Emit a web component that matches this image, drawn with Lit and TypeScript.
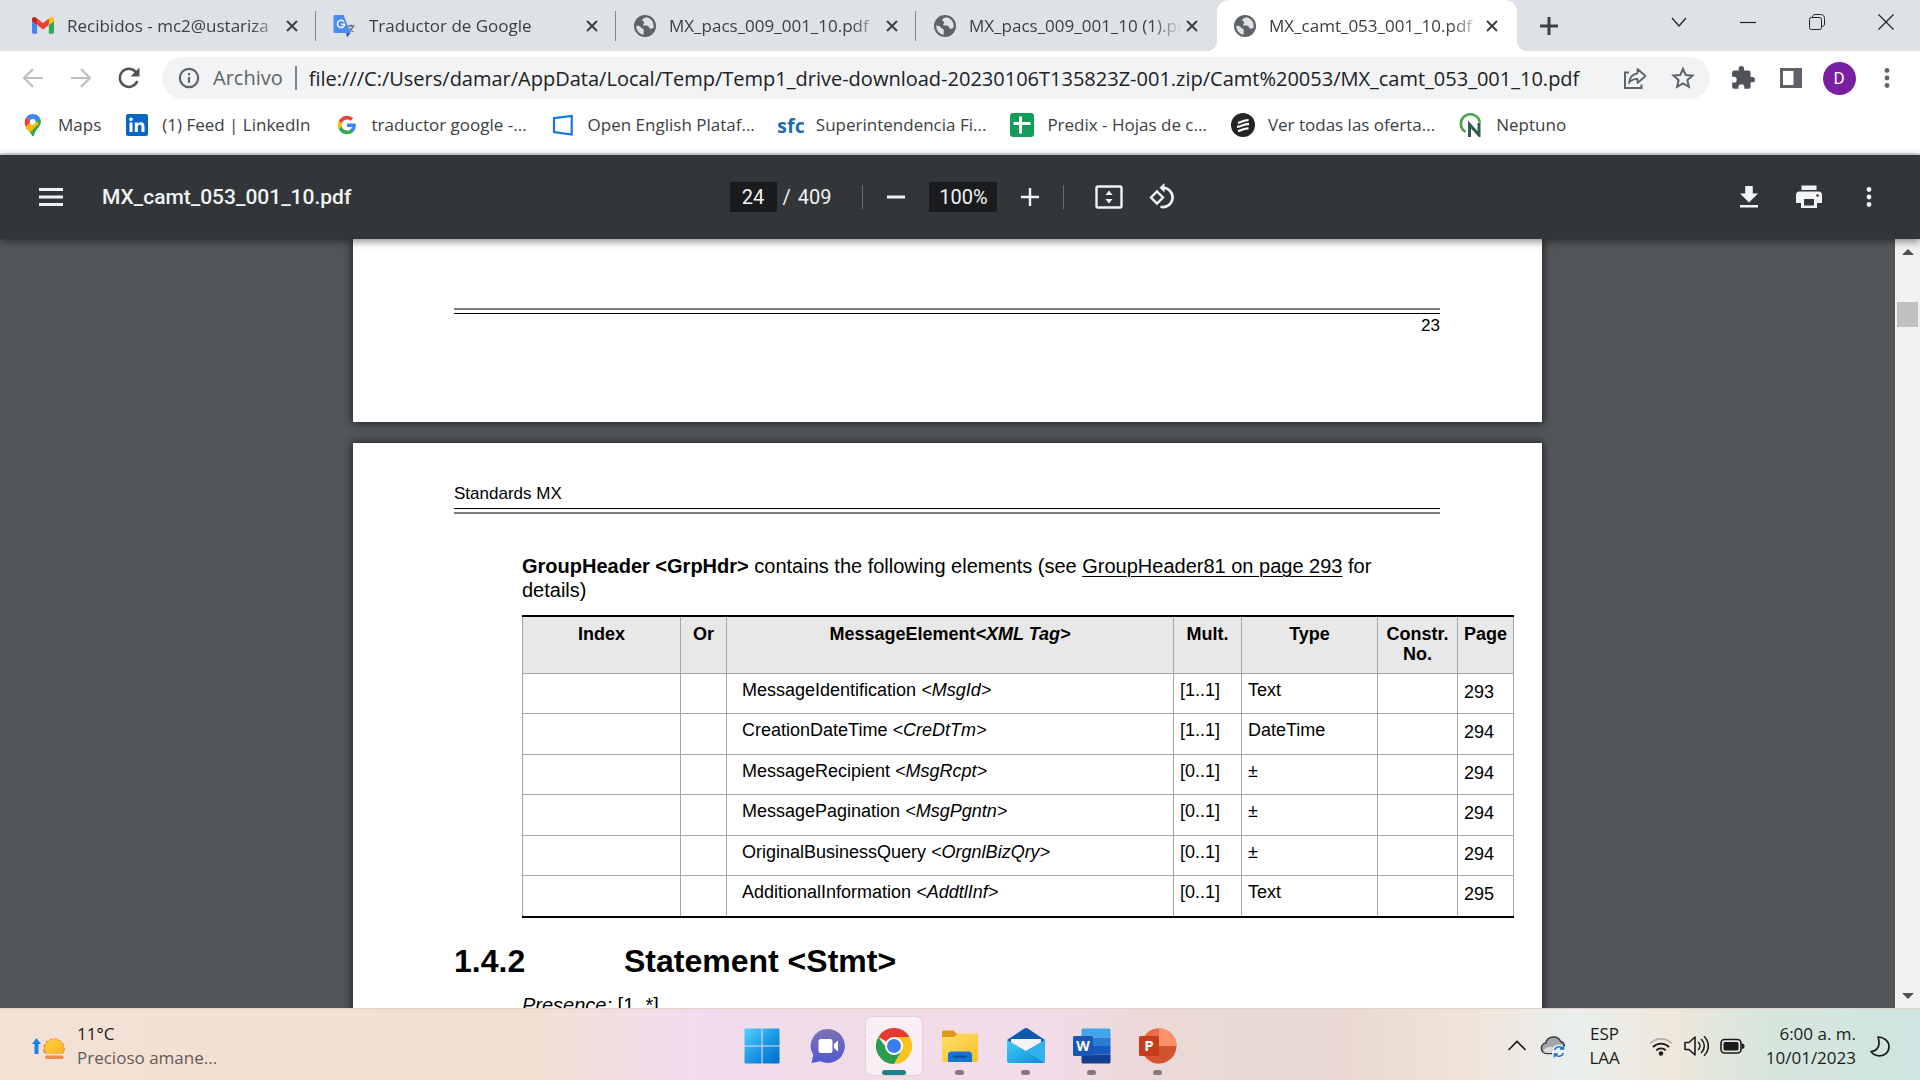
import { LitElement, html, svg, css, nothing, TemplateResult } from "lit";
import { customElement } from "lit/decorators.js";
import { classMap } from "lit/directives/class-map.js";

/* ---------- icons ---------- */

const icon = (size: number, body: TemplateResult, box = "0 0 24 24") =>
  html`<svg width=${size} height=${size} viewBox=${box} fill="none" aria-hidden="true">${body}</svg>`;

const gmail = icon(22, svg`
  <path d="M1.6 20.5h4V11L0 6.8v12.1c0 .9.7 1.6 1.6 1.6z" fill="#4285f4"/>
  <path d="M18.4 20.5h4c.9 0 1.6-.7 1.6-1.6V6.8L18.4 11z" fill="#34a853"/>
  <path d="M18.4 4.7V11L24 6.8V4.6c0-2-2.3-3.2-3.9-2z" fill="#fbbc04"/>
  <path d="M5.6 11V3.8l6.4 4.8 6.4-4.8V11L12 15.8z" fill="#ea4335"/>
  <path d="M0 4.6v2.2L5.6 11V3.8L3.9 2.6C2.3 1.4 0 2.6 0 4.6z" fill="#c5221f"/>`);

const translate = icon(24, svg`
  <path d="M9 6h13a1.500 1.500 0 0 1 1.500 1.500V20a1.500 1.500 0 0 1-1.500 1.500H14z" fill="#dfe1e5"/>
  <path d="M14.500 12h7M18 10.500V12m2 0c-.5 2.500-2 4.500-4.500 6M16.500 14c1 2 2.500 3.300 4.200 4" stroke="#6b757d" stroke-width="1.300"/>
  <path d="M13 19h4.500L14 23.500z" fill="#3a55b0"/>
  <path d="M2 1h8.500L17.500 19H2A1.500 1.500 0 0 1 .5 17.500v-15A1.500 1.500 0 0 1 2 1z" fill="#4a8af4"/>
  <path d="M11 7.900A3.600 3.600 0 1 0 11.600 10.300H8.300" stroke="#fff" stroke-width="1.500"/>`);

const globe = icon(24, svg`
  <circle cx="12" cy="12" r="11" fill="#5f6368"/>
  <path d="M3.200 11.500c2.400.2 4 .6 4.700 2 .6 1.200 2.200 1 2.800 2 .6 1.200-.6 2.300.2 5.300A8.900 8.900 0 0 1 3.200 11.500z" fill="#dee1e6"/>
  <path d="M13.500 3.200c-2 1-4 1-4.200 2.800-.1 1.500 1.500 1 1.900 2.200.3 1.200-1.200 1.300-1 2.600.3 1.500 3 .5 4.700 1.200 1.500.7 1.100 2.400 2.500 2.700 1 .2 2-.6 3.200-1A9 9 0 0 0 13.500 3.200z" fill="#dee1e6"/>`);

const cross = icon(14, svg`<path d="M2 2l10 10M12 2L2 12" stroke="#3c4043" stroke-width="2"/>`, "0 0 14 14");
const plus = icon(20, svg`<path d="M10 1v18M1 10h18" stroke="#3c4043" stroke-width="3"/>`, "0 0 20 20");

const winDown = icon(18, svg`<path d="M2 5l7 8 7-8" stroke="#222" stroke-width="1.200"/>`, "0 0 18 18");
const winMin = icon(18, svg`<path d="M1 9.500h16" stroke="#222" stroke-width="1.200"/>`, "0 0 18 18");
const winRestore = icon(18, svg`<rect x="1.500" y="4.500" width="12" height="12" rx="2" stroke="#222"/><path d="M4.500 4.500C4.500 2.500 5.500 1.500 7 1.500h5.500c2.500 0 4 1.500 4 4V11c0 1.500-1 2.500-3 2.500" stroke="#222"/>`, "0 0 18 18");
const winClose = icon(18, svg`<path d="M1.500 1.500l15 15M16.500 1.500l-15 15" stroke="#222" stroke-width="1.200"/>`, "0 0 18 18");

const back = icon(24, svg`<path d="M22 12H3.500M12 3l-9 9 9 9" stroke="#bdbfc2" stroke-width="2.200"/>`);
const forward = icon(24, svg`<path d="M2 12h18.500M12 3l9 9-9 9" stroke="#bdbfc2" stroke-width="2.200"/>`);
const reload = icon(24, svg`<path d="M20.300 15A9 9 0 1 1 18.800 6.100" stroke="#505459" stroke-width="2.500"/><path d="M22.500 1.500v9h-9z" fill="#505459"/>`);
const info = icon(22, svg`<circle cx="12" cy="12" r="10" stroke="#5f6368" stroke-width="2.400"/><path d="M12 10.800v6.400M12 6.500v2.400" stroke="#5f6368" stroke-width="2.400"/>`);
const share = icon(24, svg`<path d="M6 6.500H2v15.500h16.500v-3.500" stroke="#5f6368" stroke-width="2"/><path d="M14.500 3l8 7-8 7v-4.200c-4 0-6.500 1-8.500 4.200.6-5.500 3.500-9 8.500-9.700z" stroke="#5f6368" stroke-width="1.800" stroke-linejoin="round"/>`);
const star = icon(24, svg`<path d="M12 2.800l2.700 6.200 6.800.6-5.100 4.500 1.500 6.700-5.900-3.500-5.900 3.500 1.500-6.700-5.100-4.500 6.800-.6z" stroke="#5f6368" stroke-width="2"/>`);
const puzzle = icon(26, svg`<path d="M20.500 11H19V7a2 2 0 0 0-2-2h-4V3.500a2.500 2.500 0 0 0-5 0V5H4a2 2 0 0 0-2 2v3.800h1.500a2.700 2.700 0 0 1 0 5.400H2V20a2 2 0 0 0 2 2h3.800v-1.500a2.700 2.700 0 0 1 5.400 0V22H17a2 2 0 0 0 2-2v-4h1.500a2.500 2.500 0 0 0 0-5z" fill="#505459"/>`);
const panel = icon(22, svg`<rect x="1.500" y="2.500" width="19" height="17" stroke="#5f6368" stroke-width="3"/><path d="M13.500 2h7v18h-7z" fill="#5f6368"/>`, "0 0 22 22");
const dots = (c: string) => icon(24, svg`<circle cx="12" cy="4.500" r="2.400" fill=${c}/><circle cx="12" cy="12" r="2.400" fill=${c}/><circle cx="12" cy="19.500" r="2.400" fill=${c}/>`);

const mapsPin = icon(24, svg`
  <path d="M5 15.500L18.500 4.500c2.200 3.500 1.300 6.700-.8 9.300C15 17 13.800 19 12.900 22.500c-.3 1.100-1.500 1.100-1.800 0C10.200 19.500 8 17.500 5 15.500z" fill="#34a853"/>
  <path d="M5.300 4.300L10.300 8.500 4.900 14.300C3.300 11.500 3.200 7.200 5.300 4.300z" fill="#ea4335"/>
  <path d="M4.900 14.300L13.500 5l4.500 6-8.800 9.200c-1.400-2.200-3.100-3.700-4.300-5.900z" fill="#fbbc04"/>
  <path d="M18 10.500c.9-2 1.300-4 .5-6.300l1 3c.4 2.800-.6 5.200-2.300 7.200-2.600 3.200-3.600 5-4.300 8.100-.3 1.100-1.500 1.100-1.800 0-.4-1.200-1-2-1.900-3.300z" fill="#34a853"/>
  <path d="M5.300 4.300C7 2 9.300 1 12 1c3 0 5.500 1.400 6.700 4l-5.400 6.500L10.300 8.500z" fill="#4285f4"/>
  <circle cx="11.700" cy="8.800" r="2.900" fill="#fff"/>`);
const linkedin = icon(22, svg`<rect width="22" height="22" rx="2" fill="#0a66c2"/><path d="M3.500 8.500h3v9.500h-3zM8.800 8.500h2.900v1.300c.6-1 1.700-1.600 3-1.600 3 0 3.800 1.900 3.800 4.500V18h-3v-4.700c0-1.300-.3-2.500-1.700-2.500s-2 1.100-2 2.500V18h-3z" fill="#fff"/><circle cx="5" cy="5.300" r="1.800" fill="#fff"/>`, "0 0 22 22");
const googleG = icon(20, svg`
  <path d="M22.600 12.200c0-.7-.1-1.400-.2-2.100H12v4.200h5.900a5 5 0 0 1-2.200 3.300v2.800h3.600c2.100-2 3.300-4.800 3.300-8.200z" fill="#4285f4"/>
  <path d="M12 23c3 0 5.500-1 7.300-2.700l-3.600-2.700c-1 .7-2.200 1-3.700 1-2.900 0-5.300-1.900-6.200-4.500H2.200V17A11 11 0 0 0 12 23z" fill="#34a853"/>
  <path d="M5.800 14.100a6.600 6.600 0 0 1 0-4.200V7H2.200a11 11 0 0 0 0 9.900z" fill="#fbbc05"/>
  <path d="M12 5.400c1.600 0 3 .6 4.200 1.600l3.200-3.100A11 11 0 0 0 2.200 7l3.600 2.900C6.700 7.300 9.100 5.400 12 5.400z" fill="#ea4335"/>`);
const bookDoor = icon(22, svg`<path d="M2 4.200L19.700 2v18.500L2 18z" stroke="#1a73e8" stroke-width="2.200"/>`, "0 0 22 22");
const sfc = html`<svg width="26" height="26" viewBox="0 0 26 26" aria-hidden="true"><text x="13" y="21" text-anchor="middle" font-family="Open Sans, sans-serif" font-size="20" font-weight="700" fill="#1f6fae">sfc</text></svg>`;
const sheets = icon(24, svg`<rect width="24" height="24" rx="3" fill="#129d58"/><path d="M10.500 3.500v17M3.500 10.500h17" stroke="#fff" stroke-width="3"/>`);
const stripes = icon(24, svg`<circle cx="12" cy="12" r="12" fill="#252525"/><path d="M7 9.800c3.500 0 5.500-3 10.500-2.700M6 13.900c4.500 0 6.800-3.200 12-2.700M7 18c3.500 0 5.500-3 10.500-2.700" stroke="#fff" stroke-width="2.200"/>`);
const neptuno = icon(24, svg`<path d="M6.500 19A9.500 9.500 0 1 1 20.800 9.500" stroke="#46a546" stroke-width="2.600"/><path d="M10.500 24V11.500L20 22V10" stroke="#2f5d54" stroke-width="3"/>`);

const W = "#f1f3f4";
const menu = icon(24, svg`<path d="M0 4.500h24M0 12h24M0 19.500h24" stroke=${W} stroke-width="3"/>`);
const minus = icon(20, svg`<path d="M1 10h18" stroke=${W} stroke-width="3"/>`, "0 0 20 20");
const zoomPlus = icon(20, svg`<path d="M1 10h18M10 1v18" stroke=${W} stroke-width="2.400"/>`, "0 0 20 20");
const fit = icon(28, svg`<rect x="1.500" y="3.500" width="25" height="21" rx="1.500" stroke=${W} stroke-width="2.400"/><path d="M14 7.500l3.500 4.500h-7zM14 20.500l3.500-4.500h-7z" fill=${W}/>`, "0 0 28 28");
const rotate = icon(28, svg`<path d="M8 8.500L14 14.500l-6 6-6-6z" stroke=${W} stroke-width="2.400"/><path d="M14 4.700a9.700 9.700 0 1 1-2.500 19.100" stroke=${W} stroke-width="2.600"/><path d="M15.500 0v9.500L10.500 4.700z" fill=${W}/>`, "0 0 28 28");
const download = icon(24, svg`<path d="M8.200 1h7.600v7.500H21l-9 9-9-9h5.200zM3 20h18v2.600H3z" fill=${W}/>`);
const printer = icon(26, svg`<path d="M5.500 1.500h15V6h-15zM22.500 7.500h-19A3.500 3.500 0 0 0 0 11v8h5v5h16v-5h5v-8a3.500 3.500 0 0 0-3.500-3.500z" fill=${W}/><path d="M8 15h10v6.500H8z" fill="#323639"/><circle cx="21.500" cy="11.500" r="1.300" fill="#323639"/>`, "0 0 26 26");
const tri = (d: string) => icon(12, svg`<path d=${d} fill="#505050"/>`, "0 0 12 12");

const sunrise = html`<svg width="36" height="28" viewBox="0 0 36 28" aria-hidden="true">
  <defs><linearGradient id="sun" x1="0" y1="0" x2="1" y2="1"><stop offset="0" stop-color="#ffd43b"/><stop offset="1" stop-color="#fbb324"/></linearGradient></defs>
  <path d="M4.500 6l4.500 6H6.500v10h-4V12H0z" fill="#1f7bf2"/>
  <path d="M12.500 21.500a12 12 0 0 1-1.500-3l1-2.500-.5-2.500 2.200-1.700.6-2.700 2.800-.5 1.800-2.100 2.600.7L24 6l1.800 1.800 2.700.1 1 2.500 2.300 1.400-.1 2.600 1.500 2.200-.9 2.400-.8 2.500z" fill="#f08a3c"/>
  <path d="M14 21.500a9.500 9.500 0 1 1 16.500 0z" fill="url(#sun)"/>
  <rect x="13" y="23.500" width="18.500" height="3.500" rx="1.700" fill="#ef8b4e"/></svg>`;

const start = icon(36, svg`
  <defs><linearGradient id="win" x1="0" y1="0" x2="36" y2="36" gradientUnits="userSpaceOnUse"><stop offset="0" stop-color="#58d3fb"/><stop offset=".5" stop-color="#1c9be6"/><stop offset="1" stop-color="#0067c8"/></linearGradient></defs>
  <path d="M1.500.5H17.500V17.500H.5V1.500a1 1 0 0 1 1-1zM18.500.5h16a1 1 0 0 1 1 1v16h-17zM.5 18.500h17v17h-16a1 1 0 0 1-1-1zM18.500 18.500h17v16a1 1 0 0 1-1 1h-16z" fill="url(#win)"/>`, "0 0 36 36");
const chat = icon(36, svg`
  <defs><linearGradient id="ch" x1="0" y1="0" x2="0" y2="1"><stop offset="0" stop-color="#7d72b4"/><stop offset="1" stop-color="#5059cf"/></linearGradient></defs>
  <path d="M18 1a17 17 0 1 1-7.500 32.300L1.500 35l1.800-8A17 17 0 0 1 18 1z" fill="url(#ch)"/>
  <rect x="8.500" y="11" width="14" height="14" rx="2.500" fill="#fff"/><path d="M24 16l4-3.500v11L24 20z" fill="#fff"/>`, "0 0 36 36");
const chrome = icon(36, svg`
  <path d="M18 18L2.400 9A18 18 0 0 1 33.600 9z" fill="#e33b2e"/>
  <path d="M18 18h-9L2.400 9A18 18 0 0 0 18 36l7.800-13.500z" fill="#2a9c4b"/>
  <path d="M33.600 9H18l7.800 13.500L18 36A18 18 0 0 0 33.600 9z" fill="#fcc31e"/>
  <circle cx="18" cy="18" r="9" fill="#fff"/><circle cx="18" cy="18" r="7" fill="#3b7ded"/>`, "0 0 36 36");
const folder = icon(36, svg`
  <defs><linearGradient id="fo" x1="0" y1="0" x2="1" y2="1"><stop offset="0" stop-color="#ffdf6b"/><stop offset="1" stop-color="#f8bf2a"/></linearGradient></defs>
  <path d="M0 4.500A2 2 0 0 1 2 2.500h9.500l4 4H34a2 2 0 0 1 2 2V14H0z" fill="#dc9a17"/>
  <path d="M0 9h12l4-3.500h18a2 2 0 0 1 2 2V32a2 2 0 0 1-2 2H2a2 2 0 0 1-2-2z" fill="url(#fo)"/>
  <path d="M6 34v-7a3.500 3.500 0 0 1 3.500-3.500h17A3.500 3.500 0 0 1 30 27v7z" fill="#1276d2"/><path d="M12 28.500h12" stroke="#0a4f9c" stroke-width="2" stroke-linecap="round"/>`, "0 0 36 36");
const mail = icon(38, svg`
  <defs><linearGradient id="ma" x1="0" y1="0" x2="1" y2="1"><stop offset="0" stop-color="#3ed0f7"/><stop offset="1" stop-color="#1485dc"/></linearGradient></defs>
  <path d="M0 13L16.500 2a4 4 0 0 1 5 0L38 13v6H0z" fill="#0a5bb0"/><path d="M4 12h30v12H4z" fill="#f5f3f3"/>
  <path d="M0 13l19 11 19-11v21a2 2 0 0 1-2 2H2a2 2 0 0 1-2-2z" fill="url(#ma)"/><path d="M19 24L37 35.500c.6-.3 1-1 1-1.500V13z" fill="#2fb2ee"/>`, "0 0 38 38");
const word = html`<svg width="38" height="38" viewBox="0 0 38 38" aria-hidden="true">
  <path d="M10 1.500h26a1.500 1.500 0 0 1 1.500 1.500v7.500H8.500V3A1.500 1.500 0 0 1 10 1.500z" fill="#41a5ee"/><path d="M8.500 10.500h29v8.500h-29z" fill="#2b7cd3"/><path d="M8.500 19h29v8.500h-29z" fill="#185abd"/><path d="M8.500 27.500h29V35a1.500 1.500 0 0 1-1.500 1.500H10A1.500 1.500 0 0 1 8.500 35z" fill="#103f91"/>
  <rect y="9" width="20" height="20" rx="1.500" fill="#1a55b8"/><text x="10" y="24" text-anchor="middle" font-family="Open Sans, sans-serif" font-size="14" font-weight="700" fill="#fff">W</text></svg>`;
const ppt = html`<svg width="38" height="38" viewBox="0 0 38 38" aria-hidden="true">
  <circle cx="20" cy="19" r="17.500" fill="#d35230"/><path d="M20 1.500A17.500 17.500 0 0 0 2.500 19H20z" fill="#ed6c47"/><path d="M20 1.500A17.500 17.500 0 0 1 37.500 19H20z" fill="#ff8f6b"/><path d="M2.500 19H20v17.500A17.500 17.500 0 0 1 2.500 19z" fill="#d8552f"/>
  <rect y="9" width="20" height="20" rx="1.500" fill="#c43e1c"/><text x="10" y="24" text-anchor="middle" font-family="Open Sans, sans-serif" font-size="15" font-weight="700" fill="#fff">P</text></svg>`;

const K = "#1b1b1b";
const chevUp = icon(20, svg`<path d="M1.500 14L10 5.500l8.500 8.500" stroke=${K} stroke-width="1.600"/>`, "0 0 20 20");
const cloud = icon(26, svg`<path d="M6.500 20.500a5.300 5.300 0 0 1-.8-10.500 8 8 0 0 1 15-1.500 5.500 5.500 0 0 1 3.500 6" fill="#a5a5a8"/><path d="M12 20.500H6.500a5.300 5.300 0 0 1-.8-10.500 8 8 0 0 1 15-1.500 5.500 5.500 0 0 1 3.800 5" stroke="#3b3b3d" stroke-width="1.500"/><path d="M3 18c2-4 7-5 10-4l-2 6H6z" fill="#dadadb"/><circle cx="19" cy="18.500" r="7" fill="#edf2f3"/><path d="M14.500 17a5 5 0 0 1 8.500-1.500M23.500 20a5 5 0 0 1-8.500 1.500M23.500 12.500v3.500H20M14.500 24.500V21H18" stroke="#1a73c9" stroke-width="1.500"/>`, "0 0 26 26");
const wifi = icon(24, svg`<path d="M1 9.500a15.600 15.600 0 0 1 22 0" stroke="#b0b0ac" stroke-width="1.700"/><path d="M4 13a11.300 11.300 0 0 1 16 0M7.200 16.300a6.900 6.900 0 0 1 9.600 0" stroke=${K} stroke-width="1.800"/><circle cx="12" cy="19.500" r="2.200" fill=${K}/>`);
const speaker = icon(26, svg`<path d="M2 9.500h4l6-5.500v18l-6-5.500H2z" stroke=${K} stroke-width="1.600" stroke-linejoin="round"/><path d="M15.500 9.500a5 5 0 0 1 0 7M18.500 6.500a9 9 0 0 1 0 13M21.500 3.800a13 13 0 0 1 0 18.400" stroke=${K} stroke-width="1.600" stroke-linecap="round"/>`, "0 0 26 26");
const battery = icon(26, svg`<rect x="2" y="6.500" width="20" height="13.500" rx="3.500" stroke=${K} stroke-width="1.600"/><rect x="4.500" y="9" width="15" height="8.500" rx="1.500" fill=${K}/><path d="M23 10.500c1.500 0 2.500 1 2.500 2.800S24.500 16 23 16z" fill=${K}/>`, "0 0 26 26");
const moon = icon(24, svg`<path d="M10 3c7 .3 11 4.800 11 9.800 0 5.300-4.200 9-9.500 9-3.500 0-6.500-1.500-8.500-4.300 6-.3 10-5.500 7-14.500z" stroke=${K} stroke-width="1.700" stroke-linejoin="round"/>`);

/* ---------- data ---------- */

const tabs = [
  { icon: gmail, title: "Recibidos - mc2@ustariza" },
  { icon: translate, title: "Traductor de Google" },
  { icon: globe, title: "MX_pacs_009_001_10.pdf" },
  { icon: globe, title: "MX_pacs_009_001_10 (1).pdf" },
  { icon: globe, title: "MX_camt_053_001_10.pdf", active: true },
];

const bookmarks = [
  { icon: mapsPin, label: "Maps" },
  { icon: linkedin, label: "(1) Feed | LinkedIn" },
  { icon: googleG, label: "traductor google -..." },
  { icon: bookDoor, label: "Open English Plataf..." },
  { icon: sfc, label: "Superintendencia Fi..." },
  { icon: sheets, label: "Predix - Hojas de c..." },
  { icon: stripes, label: "Ver todas las oferta..." },
  { icon: neptuno, label: "Neptuno" },
];

const rows = [
  ["MessageIdentification", "<MsgId>", "[1..1]", "Text", "293"],
  ["CreationDateTime", "<CreDtTm>", "[1..1]", "DateTime", "294"],
  ["MessageRecipient", "<MsgRcpt>", "[0..1]", "±", "294"],
  ["MessagePagination", "<MsgPgntn>", "[0..1]", "±", "294"],
  ["OriginalBusinessQuery", "<OrgnlBizQry>", "[0..1]", "±", "294"],
  ["AdditionalInformation", "<AddtlInf>", "[0..1]", "Text", "295"],
];

const apps = [
  { name: "Inicio", icon: start },
  { name: "Chat", icon: chat },
  { name: "Google Chrome", icon: chrome, active: true },
  { name: "Explorador de archivos", icon: folder, open: true },
  { name: "Correo", icon: mail, open: true },
  { name: "Word", icon: word, open: true },
  { name: "PowerPoint", icon: ppt, open: true },
];

const base = css`
  * { box-sizing: border-box; }
  button, input { font: inherit; color: inherit; border: 0; padding: 0; margin: 0; background: none; outline: none; min-width: 0; }
  button { display: flex; align-items: center; justify-content: center; cursor: pointer; }
  a { color: inherit; text-decoration: none; }
  svg { display: block; flex: none; }
`;

/* ---------- browser frame ---------- */

@customElement("browser-frame")
export class BrowserFrame extends LitElement {
  static styles = [base, css`
    :host { display: block; background: #fff; color: #3c4043; font: 17px/24px "Open Sans", "Noto Sans", sans-serif; border-bottom: 2px solid #dadce0; }
    .strip { display: flex; height: 51px; background: #dee1e6; padding-left: 15px; }
    .tab { flex: 0 1 300px; min-width: 0; display: flex; align-items: center; padding: 0 15px 0 16px; position: relative; }
    .tab:first-child { flex-basis: 302px; }
    .tab + .tab::before { content: ""; width: 1px; height: 30px; background: #85898e; position: absolute; left: -2px; top: 11px; }
    .tab.active { background: #fff; border-radius: 12px 12px 0 0; }
    .tab.active::before { display: none; }
    .tab.active::after { content: ""; position: absolute; left: -10px; right: -10px; bottom: 0; height: 10px;
      background: radial-gradient(circle at 0 0, transparent 10px, #fff 10px) left / 10px 10px no-repeat,
        radial-gradient(circle at 100% 0, transparent 10px, #fff 10px) right / 10px 10px no-repeat; }
    .title { flex: 1; justify-content: flex-start; gap: 12px; }
    .fav { width: 24px; display: flex; justify-content: center; flex: none; }
    .name { flex: 1; width: 0; text-align: left; white-space: nowrap; overflow: hidden; mask-image: linear-gradient(90deg, #000 calc(100% - 30px), transparent); }
    .close { width: 20px; height: 20px; }
    .new { width: 64px; }
    .window { margin-left: auto; display: flex; height: 43px; }
    .window button { width: 69px; }
    .bar { display: flex; align-items: center; height: 54px; padding: 0 9px; }
    .tool { width: 48px; height: 42px; flex: none; }
    .omni { flex: 1; display: flex; align-items: center; height: 42px; margin: 0 9px; padding: 0 3px 0 16px; border-radius: 21px; background: #f1f3f4; font-size: 20px; }
    .scheme { margin-left: 13px; color: #5f6368; padding-right: 12px; border-right: 2px solid #80868b; }
    .url { flex: 1; margin-left: 12px; height: 32px; color: #202124; }
    .avatar { width: 33px; height: 33px; border-radius: 50%; background: #7b1fa2; color: #fff; font: 17px/33px Roboto, sans-serif; }
    .marks { display: flex; align-items: center; height: 48px; padding: 0 20px 8px; gap: 23px; }
    .mark { display: flex; align-items: center; gap: 12px; white-space: nowrap; }
    .mark-icon { width: 26px; display: flex; justify-content: center; }
  `];

  render() {
    return html`
      <div class="strip">
        ${tabs.map((t) => html`<div class=${classMap({ tab: true, active: !!t.active })}>
          <button class="title"><span class="fav">${t.icon}</span><span class="name">${t.title}</span></button>
          <button class="close" aria-label="Cerrar pestaña">${cross}</button>
        </div>`)}
        <button class="new" aria-label="Nueva pestaña">${plus}</button>
        <div class="window">
          <button aria-label="Buscar pestañas">${winDown}</button>
          <button aria-label="Minimizar">${winMin}</button>
          <button aria-label="Restaurar">${winRestore}</button>
          <button aria-label="Cerrar">${winClose}</button>
        </div>
      </div>
      <div class="bar">
        <button class="tool" aria-label="Atrás">${back}</button>
        <button class="tool" aria-label="Adelante">${forward}</button>
        <button class="tool" aria-label="Volver a cargar">${reload}</button>
        <div class="omni">
          ${info}<span class="scheme">Archivo</span>
          <input class="url" aria-label="Dirección" value="file:///C:/Users/damar/AppData/Local/Temp/Temp1_drive-download-20230106T135823Z-001.zip/Camt%20053/MX_camt_053_001_10.pdf" />
          <button class="tool" aria-label="Compartir">${share}</button>
          <button class="tool" aria-label="Añadir a marcadores">${star}</button>
        </div>
        <button class="tool" aria-label="Extensiones">${puzzle}</button>
        <button class="tool" aria-label="Panel lateral">${panel}</button>
        <button class="tool" aria-label="Perfil"><span class="avatar">D</span></button>
        <button class="tool" aria-label="Más">${dots("#5f6368")}</button>
      </div>
      <nav class="marks">
        ${bookmarks.map((b) => html`<a class="mark" href="#"><span class="mark-icon">${b.icon}</span>${b.label}</a>`)}
      </nav>`;
  }
}

/* ---------- PDF viewer ---------- */

@customElement("pdf-viewer")
export class PdfViewer extends LitElement {
  static styles = [base, css`
    :host { display: flex; flex-direction: column; min-height: 0; background: #525659; color: #000; }
    .toolbar { flex: none; display: grid; grid-template-columns: 1fr auto 1fr; align-items: center; height: 84px; padding: 0 27px; background: #323639; color: #f1f3f4;
      font: 20px/30px Roboto, sans-serif; position: relative; z-index: 1; box-shadow: 0 2px 8px rgba(0, 0, 0, .5); }
    .left, .middle, .right { display: flex; align-items: center; }
    .left { gap: 27px; }
    .right { justify-content: flex-end; gap: 12px; }
    .tool { width: 48px; height: 48px; }
    .doc-name { margin: 0; font-size: 21px; font-weight: 500; }
    .field { height: 30px; background: #191b1c; text-align: center; }
    .page-no { width: 47px; }
    .zoom { width: 68px; }
    .total { margin-left: 6px; }
    .total span { margin-left: 2px; }
    .sep { width: 1px; height: 24px; background: #6b6e71; }
    .total + .sep { margin: 0 9px 0 31px; }
    .zoom ~ .sep { margin: 0 18px 0 9px; }
    .zoom-out { margin: 0 9px 0 0; }
    .zoom + .tool { margin-left: 9px; }
    .middle .tool.view { width: 54px; }
    .scroller { flex: 1; min-height: 0; display: flex; }
    .canvas { flex: 1; min-width: 0; overflow: hidden; display: flex; flex-direction: column; align-items: center; gap: 21px; font-family: "Liberation Sans", Arial, sans-serif; }
    .sheet { flex: none; width: 1189px; max-width: 100%; background: #fff; padding: 0 102px 0 101px; box-shadow: 0 0 8px 1px rgba(0, 0, 0, .6); }
    .prev { padding-top: 69px; padding-bottom: 86px; }
    .current { padding-top: 41px; min-height: 1682px; }
    .rule { height: 6px; border: 0 solid; }
    .rule.foot { border-top: 2px solid #7d7d7d; border-bottom: 1px solid #000; }
    .rule.head { border-top: 1px solid #000; border-bottom: 2px solid #7d7d7d; margin-top: 4px; }
    .small { font-size: 17px; line-height: 20px; margin: 0; }
    .folio { text-align: right; padding-top: 2px; }
    .body { margin-left: 68px; }
    .lead { margin: 40px 0 13px; font-size: 20px; line-height: 24px; }
    .lead a { text-decoration: underline; text-underline-offset: 3px; text-decoration-thickness: 1px; }
    .elements { width: 992px; table-layout: fixed; border-collapse: collapse; font-size: 18px; line-height: 20px; border-top: 2px solid #000; border-bottom: 2px solid #000; }
    .elements th, .elements td { border: 1px solid #a6a6a6; padding: 0 6px; text-align: left; vertical-align: top; }
    .elements th { background: #e8e8e8; text-align: center; height: 57px; padding: 7px 0 0; border-top: 2px solid #000; }
    .elements td { padding-top: 6px; height: 40px; }
    .elements tr:nth-child(even) td { height: 41px; }
    .elements tr:last-child td { height: 42px; border-bottom: 2px solid #000; }
    .elements .element { padding-left: 15px; }
    .elements .page { padding-top: 8px; }
    .c-index { width: 158px; } .c-or { width: 46px; } .c-mult { width: 68px; } .c-type { width: 136px; } .c-constr { width: 80px; } .c-page { width: 56px; }
    .section { display: flex; margin: 23px 0 12px; font-size: 32px; line-height: 40px; font-weight: 700; }
    .number { width: 170px; }
    .presence { margin: 0; font-size: 20px; line-height: 24px; }
    .scrollbar { width: 25px; flex: none; background: #f1f1f1; display: flex; flex-direction: column; }
    .scrollbar button { height: 25px; width: 25px; }
    .track { flex: 1; padding: 38px 2px 0; }
    .thumb { height: 25px; background: #c1c1c1; }
  `];

  render() {
    return html`
      <div class="toolbar">
        <div class="left">
          <button class="tool menu" aria-label="Menú">${menu}</button>
          <h1 class="doc-name">MX_camt_053_001_10.pdf</h1>
        </div>
        <div class="middle">
          <input class="field page-no" aria-label="Número de página" value="24" />
          <span class="total">/ <span>409</span></span>
          <span class="sep"></span>
          <button class="tool zoom-out" aria-label="Alejar">${minus}</button>
          <input class="field zoom" aria-label="Nivel de zoom" value="100%" />
          <button class="tool" aria-label="Acercar">${zoomPlus}</button>
          <span class="sep"></span>
          <button class="tool view" aria-label="Ajustar a la página">${fit}</button>
          <button class="tool view" aria-label="Girar">${rotate}</button>
        </div>
        <div class="right">
          <button class="tool" aria-label="Descargar">${download}</button>
          <button class="tool" aria-label="Imprimir">${printer}</button>
          <button class="tool" aria-label="Más acciones">${dots(W)}</button>
        </div>
      </div>
      <div class="scroller">
        <div class="canvas">
          <section class="sheet prev">
            <div class="rule foot"></div>
            <p class="small folio">23</p>
          </section>
          <section class="sheet current">
            <p class="small">Standards MX</p>
            <div class="rule head"></div>
            <div class="body">
              <p class="lead"><b>GroupHeader &lt;GrpHdr&gt;</b> contains the following elements (see <a href="#">GroupHeader81 on page 293</a> for details)</p>
              <table class="elements">
                <colgroup><col class="c-index" /><col class="c-or" /><col /><col class="c-mult" /><col class="c-type" /><col class="c-constr" /><col class="c-page" /></colgroup>
                <thead><tr>
                  <th>Index</th><th>Or</th><th>MessageElement<i>&lt;XML Tag&gt;</i></th><th>Mult.</th><th>Type</th><th>Constr. No.</th><th>Page</th>
                </tr></thead>
                <tbody>
                  ${rows.map(([name, tag, mult, type, page]) => html`<tr>
                    <td></td><td></td><td class="element">${name} <i>${tag}</i></td><td>${mult}</td><td>${type}</td><td></td><td class="page">${page}</td>
                  </tr>`)}
                </tbody>
              </table>
            </div>
            <h2 class="section"><span class="number">1.4.2</span><span>Statement &lt;Stmt&gt;</span></h2>
            <div class="body"><p class="presence"><i>Presence:</i> [1..*]</p></div>
          </section>
        </div>
        <div class="scrollbar">
          <button aria-label="Subir">${tri("M0 9l6-6 6 6z")}</button>
          <div class="track"><div class="thumb"></div></div>
          <button aria-label="Bajar">${tri("M0 3l6 6 6-6z")}</button>
        </div>
      </div>`;
  }
}

/* ---------- taskbar ---------- */

@customElement("task-bar")
export class TaskBar extends LitElement {
  static styles = [base, css`
    :host { box-sizing: border-box; display: grid; grid-template-columns: 1fr auto 1fr; height: 72px; padding-top: 2px; color: #1b1b1b; font: 17px/24px "Open Sans", "Noto Sans", sans-serif; border-top: 1px solid #e0d2c8;
      background: linear-gradient(90deg, #f3e1d5 0%, #f3e0d3 28%, #f1dcf0 36%, #f0dce6 44%, #f2dcea 54%, #ead9d7 60%, #e9d9d2 70%, #f1e3d6 76%, #e9efed 82%, #efe7da 87%, #d6e6dd 92%, #cfe5e1 100%); }
    .weather { justify-self: start; gap: 9px; padding-left: 32px; text-align: left; }
    .lines { display: grid; }
    .muted { color: #645b55; }
    .apps { display: flex; gap: 10px; align-items: center; }
    .app { position: relative; width: 56px; height: 58px; border-radius: 6px; }
    .app.active { background: rgba(255, 255, 255, .55); box-shadow: 0 0 2px rgba(0, 0, 0, .2); }
    .app.open::after, .app.active::after { content: ""; position: absolute; bottom: 0; left: 50%; margin-left: -5px; width: 9px; height: 5px; border-radius: 3px; background: #85797d; }
    .app.active::after { width: 24px; margin-left: -12px; background: #1f818a; }
    .tray { justify-self: end; display: flex; align-items: center; padding-right: 28px; }
    .lang { margin: 0 29px 0 23px; text-align: center; }
    .status { gap: 10px; }
    .clock { margin: 0 12px 0 21px; text-align: right; }
    .more { margin-right: 13px; }
  `];

  render() {
    return html`
      <button class="weather">${sunrise}<span class="lines"><span>11°C</span><span class="muted">Precioso amane...</span></span></button>
      <div class="apps">
        ${apps.map((a) => html`<button class=${classMap({ app: true, active: !!a.active, open: !!a.open })} aria-label=${a.name || nothing}>${a.icon}</button>`)}
      </div>
      <div class="tray">
        <button class="more" aria-label="Mostrar iconos ocultos">${chevUp}</button>
        <button aria-label="OneDrive">${cloud}</button>
        <button class="lang"><span class="lines"><span>ESP</span><span>LAA</span></span></button>
        <button class="status" aria-label="Red, volumen y batería">${wifi}${speaker}${battery}</button>
        <button class="clock"><span class="lines"><span>6:00 a. m.</span><span>10/01/2023</span></span></button>
        <button aria-label="No molestar">${moon}</button>
      </div>`;
  }
}

@customElement("app-root")
export class AppRoot extends LitElement {
  static styles = css`
    :host { display: flex; flex-direction: column; height: 100vh; overflow: hidden; }
    browser-frame, task-bar { flex: none; }
    pdf-viewer { flex: 1; }
  `;

  render() {
    return html`<browser-frame></browser-frame><pdf-viewer></pdf-viewer><task-bar></task-bar>`;
  }
}
